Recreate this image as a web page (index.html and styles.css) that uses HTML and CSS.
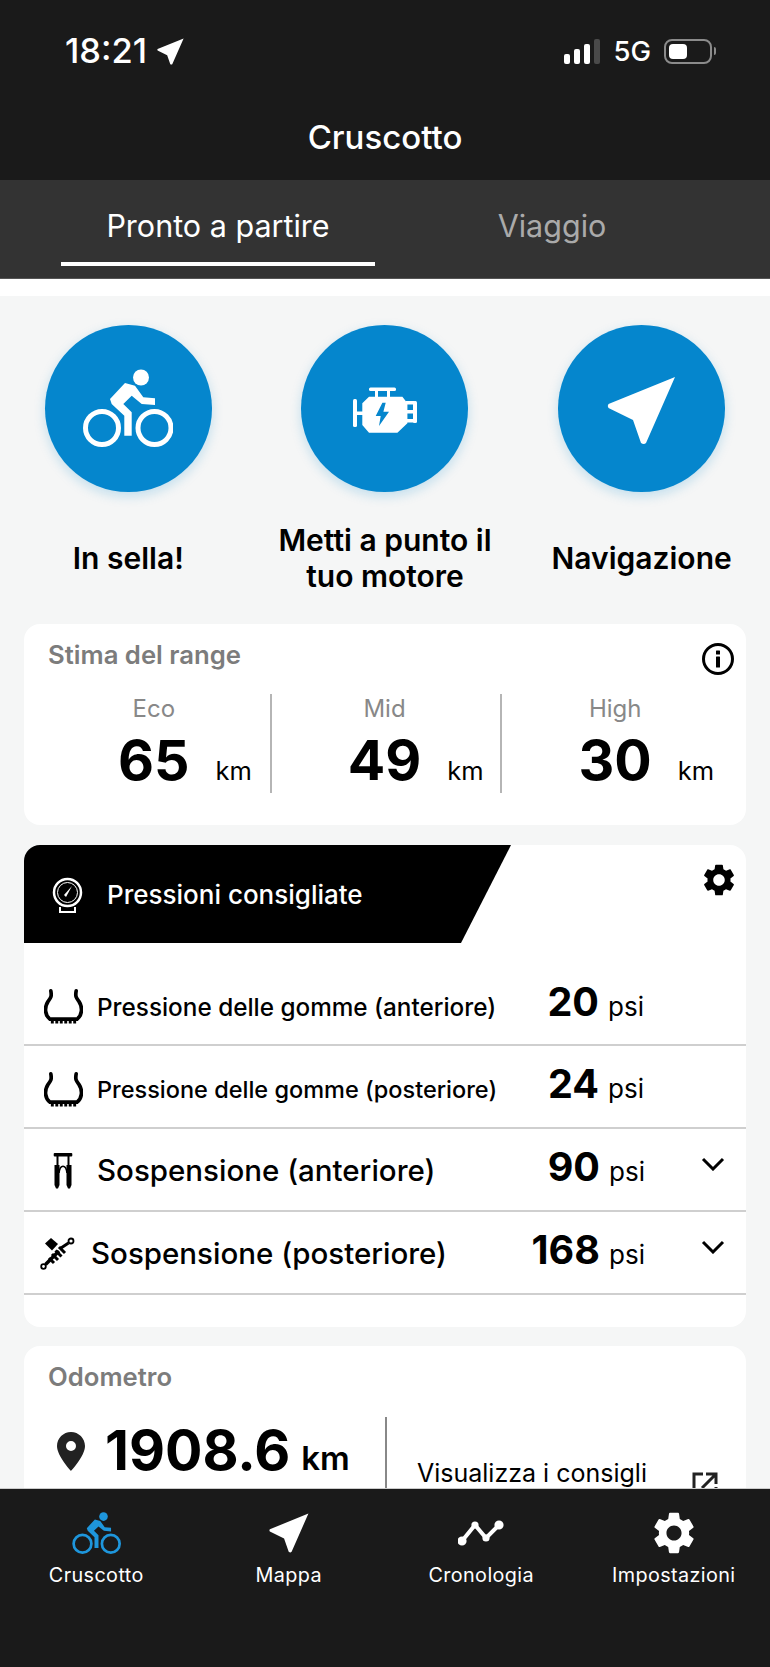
FILE: index.html
```html
<!doctype html>
<html lang="it">
<head>
    <meta charset="UTF-8">
    <meta name="viewport" content="width=device-width, initial-scale=1.0">
    <title>Cruscotto</title>
    <link rel="stylesheet" href="styles.css">
</head>
<body>
<div class="app">
    <!-- barra superiore -->
    <header class="top">
        <div class="status">
            <div class="status-left">
                <span class="time">18:21</span>
                <svg class="loc" viewBox="0 0 69 69"><path d="M68 1L1.5 28Q0 30 1.5 32L26 44L34 67Q37 69 39 67Z"/></svg>
            </div>
            <div class="status-right">
                <div class="signal"><i class="s1"></i><i class="s2"></i><i class="s3"></i><i class="s4"></i></div>
                <span class="net">5G</span>
                <div class="battery"><div class="battery-fill"></div></div>
                <div class="battery-nub"></div>
            </div>
        </div>
        <h1 class="title">Cruscotto</h1>
    </header>
    <nav class="tabs">
        <div class="tab current">Pronto a partire</div>
        <div class="tab">Viaggio</div>
    </nav>

    <main class="content">
        <div class="strip"></div>

        <section class="actions">
            <div class="action">
                <div class="circle">
                    <svg class="ic-bike" viewBox="0 0 90 78">
                        <circle class="wheel" cx="19" cy="59" r="16.5"/>
                        <circle class="wheel" cx="71.5" cy="59" r="16.5"/>
                        <circle cx="58" cy="8.5" r="8"/>
                        <path d="M27 30L42 14L52 16.7L60.3 28.3L72 29.3V36L58.7 35L48.7 26.7L40.3 35L48.7 43.3V66.7H41.3V46.7L28.7 35Z"/>
                    </svg>
                </div>
                <div class="action-label">In sella!</div>
            </div>
            <div class="action">
                <div class="circle">
                    <svg class="ic-engine" viewBox="0 0 64 46">
                        <rect x="16" y="0.5" width="27" height="3.5" rx="1.5"/>
                        <rect x="22" y="3" width="3" height="8"/>
                        <rect x="34" y="3" width="3" height="8"/>
                        <rect x="0" y="12" width="4" height="28" rx="1.5"/>
                        <rect x="3" y="24.5" width="8" height="3.5"/>
                        <rect x="60" y="14" width="4" height="22" rx="1.5"/>
                        <rect x="53" y="14" width="8" height="3.5"/>
                        <rect x="53" y="23" width="8" height="3.5"/>
                        <rect x="53" y="32" width="8" height="3.5"/>
                        <path fill-rule="evenodd" d="M9.3 16.3L16 9.7H49.4L54.4 16.3V36.3L44.4 45.7H16L9.3 38ZM29.4 15.7L22.7 29H27.7L26 39L36 24.7H30.4L32.7 15.7Z"/>
                    </svg>
                </div>
                <div class="action-label">Metti a punto il<br>tuo motore</div>
            </div>
            <div class="action">
                <div class="circle">
                    <svg class="ic-nav" viewBox="0 0 69 69"><path d="M68 1L1.5 28Q0 30 1.5 32L26 44L34 67Q37 69 39 67Z"/></svg>
                </div>
                <div class="action-label">Navigazione</div>
            </div>
        </section>

        <section class="card range">
            <div class="card-head">
                <h2 class="card-title">Stima del range</h2>
                <svg class="ic-info" viewBox="0 0 34 34">
                    <circle cx="17" cy="17" r="14.5"/>
                    <rect x="15" y="14.5" width="4" height="11" rx="0.5"/>
                    <rect x="15" y="8.5" width="4" height="4" rx="0.5"/>
                </svg>
            </div>
            <div class="range-row">
                <div class="range-col">
                    <div class="range-name">Eco</div>
                    <div class="range-value"><b>65</b><span>km</span></div>
                </div>
                <div class="range-col">
                    <div class="range-name">Mid</div>
                    <div class="range-value"><b>49</b><span>km</span></div>
                </div>
                <div class="range-col">
                    <div class="range-name">High</div>
                    <div class="range-value"><b>30</b><span>km</span></div>
                </div>
            </div>
        </section>

        <section class="card pressure">
            <div class="pressure-head">
                <div class="banner">
                    <svg class="ic-gauge" viewBox="0 0 31 37">
                        <circle class="g-ring" cx="15.5" cy="15.5" r="13.5"/>
                        <circle class="g-inner" cx="15.5" cy="15.5" r="10"/>
                        <path class="g-needle" d="M20 9L12 18L14 20Z"/>
                        <path class="g-base" d="M8 30V35H23V30"/>
                    </svg>
                    <span class="banner-text">Pressioni consigliate</span>
                </div>
                <svg class="ic-gear" viewBox="2.5 2 19 20"><path d="M19.14 12.94c.04-.3.06-.61.06-.94 0-.32-.02-.64-.07-.94l2.03-1.58c.18-.14.23-.41.12-.61l-1.92-3.32c-.12-.22-.37-.29-.59-.22l-2.39.96c-.5-.38-1.03-.7-1.62-.94l-.36-2.54c-.04-.24-.24-.41-.48-.41h-3.84c-.24 0-.43.17-.47.41l-.36 2.54c-.59.24-1.13.57-1.62.94l-2.39-.96c-.22-.08-.47 0-.59.22L2.74 8.87c-.12.21-.08.47.12.61l2.03 1.58c-.05.3-.09.63-.09.94s.02.64.07.94l-2.03 1.58c-.18.14-.23.41-.12.61l1.92 3.32c.12.22.37.29.59.22l2.39-.96c.5.38 1.03.7 1.62.94l.36 2.54c.05.24.24.41.48.41h3.84c.24 0 .44-.17.47-.41l.36-2.54c.59-.24 1.13-.56 1.62-.94l2.39.96c.22.08.47 0 .59-.22l1.92-3.32c.12-.22.07-.47-.12-.61l-2.01-1.58zM12 15.6c-1.98 0-3.6-1.62-3.6-3.6s1.62-3.6 3.6-3.6 3.6 1.62 3.6 3.6-1.62 3.6-3.6 3.6z"/></svg>
            </div>
            <div class="rows">
                <div class="row">
                    <svg class="ic-tyre" viewBox="0 0 40 36"><path class="t-line" d="M7 2C8 8 7 9 4 13C0 19 1 27 6 31H34C39 27 40 19 36 13C33 9 32 8 33 2"/><path class="t-tread" d="M7 33.5H33"/></svg>
                    <span class="row-label small">Pressione delle gomme (anteriore)</span>
                    <b class="row-num">20</b><span class="row-unit">psi</span>
                </div>
                <div class="row">
                    <svg class="ic-tyre" viewBox="0 0 40 36"><path class="t-line" d="M7 2C8 8 7 9 4 13C0 19 1 27 6 31H34C39 27 40 19 36 13C33 9 32 8 33 2"/><path class="t-tread" d="M7 33.5H33"/></svg>
                    <span class="row-label small smaller">Pressione delle gomme (posteriore)</span>
                    <b class="row-num">24</b><span class="row-unit">psi</span>
                </div>
                <div class="row row-more">
                    <svg class="ic-fork" viewBox="0 0 20 37">
                        <rect x="0.7" y="1" width="18.6" height="3.5" rx="1"/>
                        <rect x="3.5" y="4" width="2" height="9"/>
                        <rect x="14.5" y="4" width="2" height="9"/>
                        <path d="M1.5 13H6.5V33L5 36.5H3L1.5 33Z"/>
                        <path d="M13.5 13H18.5V33L17 36.5H15L13.5 33Z"/>
                        <path class="f-arch" d="M6 21C7 12 13 12 14 21"/>
                    </svg>
                    <span class="row-label">Sospensione (anteriore)</span>
                    <b class="row-num">90</b><span class="row-unit">psi</span>
                    <svg class="ic-chev" viewBox="0 0 24 14"><path d="M2 2L12 12L22 2"/></svg>
                </div>
                <div class="row row-more">
                    <svg class="ic-shock" viewBox="0 0 35 33">
                        <circle class="s-eye" cx="31" cy="4" r="2.5"/>
                        <circle class="s-eye" cx="3.5" cy="29.5" r="2.3"/>
                        <path class="s-rod" d="M5.5 27.5L19 14"/>
                        <path class="s-link" d="M28.5 6L21 11"/>
                        <path d="M5 6.5L11 1L18 7L12 13.5Z"/>
                        <path class="s-spring" d="M12 17L18 23M15.5 13.5L21.5 19.5M19 10L25 16M9 21L14 26"/>
                    </svg>
                    <span class="row-label">Sospensione (posteriore)</span>
                    <b class="row-num">168</b><span class="row-unit">psi</span>
                    <svg class="ic-chev" viewBox="0 0 24 14"><path d="M2 2L12 12L22 2"/></svg>
                </div>
            </div>
        </section>

        <section class="card odo">
            <h2 class="card-title">Odometro</h2>
            <div class="odo-row">
                <div class="odo-left">
                    <svg class="ic-pin" viewBox="0 0 28 39"><path fill-rule="evenodd" d="M14 0C6.3 0 0 6.3 0 14C0 24 14 39 14 39S28 24 28 14C28 6.3 21.7 0 14 0ZM14 9A5 5 0 1 1 14 19A5 5 0 1 1 14 9Z"/></svg>
                    <b class="odo-num">1908.6</b><span class="odo-unit">km</span>
                </div>
                <div class="odo-right">
                    <span class="odo-link">Visualizza i consigli</span>
                    <svg class="ic-ext" viewBox="0 0 26 26"><path d="M11 2H2V24H24V15M14 2H24V12M24 2L10 16"/></svg>
                </div>
            </div>
        </section>
    </main>

    <!-- menu in basso -->
    <footer class="bottom">
        <div class="bottom-item">
            <svg class="ic-bike blue" viewBox="0 0 90 78">
                <circle class="wheel" cx="19" cy="59" r="16.5"/>
                <circle class="wheel" cx="71.5" cy="59" r="16.5"/>
                <circle cx="58" cy="8.5" r="8"/>
                <path d="M27 30L42 14L52 16.7L60.3 28.3L72 29.3V36L58.7 35L48.7 26.7L40.3 35L48.7 43.3V66.7H41.3V46.7L28.7 35Z"/>
            </svg>
            <span>Cruscotto</span>
        </div>
        <div class="bottom-item">
            <svg class="ic-bottom" viewBox="0 0 69 69"><path d="M68 1L1.5 28Q0 30 1.5 32L26 44L34 67Q37 69 39 67Z"/></svg>
            <span>Mappa</span>
        </div>
        <div class="bottom-item">
            <svg class="ic-graph" viewBox="0 0 46 42">
                <path d="M4 29L17 13L28 26L41 13"/>
                <circle cx="4" cy="29" r="2.6"/><circle cx="17" cy="13" r="1.6"/><circle cx="28" cy="26" r="1.6"/><circle cx="41" cy="13" r="2.6"/>
            </svg>
            <span>Cronologia</span>
        </div>
        <div class="bottom-item">
            <svg class="ic-bottom" viewBox="2.5 2 19 20"><path d="M19.14 12.94c.04-.3.06-.61.06-.94 0-.32-.02-.64-.07-.94l2.03-1.58c.18-.14.23-.41.12-.61l-1.92-3.32c-.12-.22-.37-.29-.59-.22l-2.39.96c-.5-.38-1.03-.7-1.62-.94l-.36-2.54c-.04-.24-.24-.41-.48-.41h-3.84c-.24 0-.43.17-.47.41l-.36 2.54c-.59.24-1.13.57-1.62.94l-2.39-.96c-.22-.08-.47 0-.59.22L2.74 8.87c-.12.21-.08.47.12.61l2.03 1.58c-.05.3-.09.63-.09.94s.02.64.07.94l-2.03 1.58c-.18.14-.23.41-.12.61l1.92 3.32c.12.22.37.29.59.22l2.39-.96c.5.38 1.03.7 1.62.94l.36 2.54c.05.24.24.41.48.41h3.84c.24 0 .44-.17.47-.41l.36-2.54c.59-.24 1.13-.56 1.62-.94l2.39.96c.22.08.47 0 .59-.22l1.92-3.32c.12-.22.07-.47-.12-.61l-2.01-1.58zM12 15.6c-1.98 0-3.6-1.62-3.6-3.6s1.62-3.6 3.6-3.6 3.6 1.62 3.6 3.6-1.62 3.6-3.6 3.6z"/></svg>
            <span>Impostazioni</span>
        </div>
    </footer>
</div>
</body>
</html>
```

FILE: styles.css
```css
*{
    padding: 0;
    margin: 0;
    box-sizing: border-box;
}
body{
    font-family: Inter, "Liberation Sans", sans-serif;
    background: #f5f6f6;
    color: #000;
}
svg{
    display: block;
    flex: none;
}
.app{
    display: flex;
    flex-direction: column;
    height: 100vh;
    overflow: hidden;
}

/* barra superiore */
.top{
    height: 180px;
    background: #1a1a1a;
    color: #fff;
}
.status{
    display: flex;
    justify-content: space-between;
    align-items: center;
    height: 64px;
    padding: 38px 54px 0 65px;
}
.status-left{
    display: flex;
    align-items: center;
    gap: 10px;
}
.time{
    font-size: 34.5px;
    font-weight: 500;
    line-height: 28px;
}
.loc{
    width: 27px;
    height: 27px;
    fill: #fff;
}
.status-right{
    display: flex;
    align-items: center;
}
.signal{
    display: flex;
    align-items: flex-end;
    gap: 3.5px;
    height: 25px;
}
.signal i{
    display: block;
    width: 6.5px;
    border-radius: 2px;
    background: #fff;
}
.signal .s1{ height: 10px; }
.signal .s2{ height: 15px; }
.signal .s3{ height: 20px; }
.signal .s4{ height: 25px; background: #4a4a4a; }
.net{
    margin-left: 13px;
    font-size: 27.5px;
    font-weight: 500;
    line-height: 28px;
}
.battery{
    margin-left: 13px;
    width: 48px;
    height: 25px;
    padding: 3px;
    border: 2px solid #8b8b8b;
    border-radius: 8px;
}
.battery-fill{
    width: 18px;
    height: 15px;
    border-radius: 4px;
    background: #fff;
}
.battery-nub{
    margin-left: 2px;
    width: 2px;
    height: 8px;
    border-radius: 0 2px 2px 0;
    background: #8b8b8b;
}
.title{
    margin-top: 55px;
    text-align: center;
    font-size: 33px;
    font-weight: 500;
    line-height: 36px;
}
.tabs{
    display: flex;
    gap: 20px;
    height: 99px;
    padding: 0 61px 12px;
    background: #333;
    border-bottom: 1px solid #555;
}
.tab{
    flex: 1;
    padding-top: 28px;
    text-align: center;
    font-size: 30.5px;
    line-height: 36px;
    color: #aaa;
}
.tab.current{
    color: #fff;
    border-bottom: 4px solid #fff;
}

/* contenuto */
.content{
    flex: 1;
    overflow: hidden;
}
.strip{
    height: 17px;
    background: #fff;
}
.actions{
    display: grid;
    grid-template-columns: repeat(3, 1fr);
    padding-top: 29px;
}
.action{
    display: flex;
    flex-direction: column;
    align-items: center;
}
.circle{
    display: flex;
    align-items: center;
    justify-content: center;
    width: 167px;
    height: 167px;
    border-radius: 50%;
    background: #0586cd;
    box-shadow: 0 4px 12px rgba(7, 135, 207, 0.22);
    fill: #fff;
}
.ic-bike{
    width: 90px;
    height: 78px;
    margin-bottom: 2px;
    fill: #fff;
}
.wheel{
    fill: none;
    stroke: #fff;
    stroke-width: 5;
}
.ic-engine{
    width: 64px;
    height: 46px;
    margin-top: 2px;
}
.ic-nav{
    width: 69px;
    height: 69px;
    margin-top: 4px;
}
.action-label{
    display: flex;
    align-items: center;
    height: 72px;
    margin-top: 30px;
    text-align: center;
    font-size: 30px;
    font-weight: 600;
    line-height: 36px;
}
.card{
    margin: 0 24px;
    background: #fff;
    border-radius: 16px;
}
.range{
    height: 201px;
    margin-top: 30px;
    padding-top: 13px;
}
.card-head{
    display: flex;
    justify-content: space-between;
    padding: 0 11px 0 24px;
}
.card-title{
    font-size: 25.7px;
    font-weight: 600;
    line-height: 36px;
    color: #7c7c7c;
}
.ic-info{
    width: 34px;
    height: 34px;
    margin-top: 5px;
    fill: #000;
}
.ic-info circle{
    fill: none;
    stroke: #000;
    stroke-width: 3;
}
.range-row{
    display: grid;
    grid-template-columns: repeat(3, 1fr);
    margin: 18px 13px 0 17px;
}
.range-col{
    height: 99px;
    padding-right: 3px;
    border-right: 2px solid #b5b5b5;
}
.range-col:last-child{
    padding-right: 5px;
    border-right: 0;
}
.range-name{
    margin-bottom: 6px;
    text-align: center;
    font-size: 24px;
    line-height: 30px;
    color: #888;
}
.range-value{
    display: grid;
    grid-template-columns: 1fr auto 1fr;
    align-items: baseline;
    line-height: 60px;
}
.range-value b{
    grid-column: 2;
    font-size: 55.5px;
    font-weight: 700;
}
.range-value span{
    padding-left: 26px;
    font-size: 25.5px;
}
.pressure{
    height: 482px;
    margin-top: 20px;
    overflow: hidden;
}
.pressure-head{
    display: flex;
    justify-content: space-between;
    height: 98px;
}
.banner{
    display: flex;
    align-items: center;
    width: 487px;
    padding-left: 28px;
    background: #000;
    color: #fff;
    clip-path: polygon(0 0, 100% 0, 437px 100%, 0 100%);
}
.ic-gauge{
    width: 31px;
    height: 37px;
    margin-top: 2px;
}
.g-ring, .g-inner, .g-base{
    fill: none;
    stroke: #fff;
}
.g-ring{ stroke-width: 2.5; }
.g-inner{ stroke-width: 1; }
.g-base{ stroke-width: 2; }
.g-needle{ fill: #fff; }
.banner-text{
    margin-left: 24px;
    font-size: 26px;
    font-weight: 500;
}
.ic-gear{
    width: 32px;
    height: 32px;
    margin: 19px 11px 0 0;
    fill: #000;
}
.rows{
    padding-top: 20px;
}
.row{
    display: flex;
    align-items: baseline;
    height: 83px;
    padding-right: 102px;
    border-bottom: 2px solid #cfcfcf;
}
.row-more{
    padding-right: 21px;
}
.row svg{
    align-self: flex-start;
}
.ic-tyre{
    width: 39px;
    height: 35px;
    margin: 26px 14px 0 20px;
}
.t-line{
    fill: none;
    stroke: #000;
    stroke-width: 3.8;
    stroke-linecap: round;
}
.t-tread{
    fill: none;
    stroke: #000;
    stroke-width: 4;
    stroke-dasharray: 3 1.6;
}
.ic-fork{
    width: 20px;
    height: 37px;
    margin: 23px 24px 0 29px;
}
.f-arch{
    fill: none;
    stroke: #000;
    stroke-width: 1.6;
}
.ic-shock{
    width: 35px;
    height: 33px;
    margin: 25px 16px 0 16px;
}
.s-eye, .s-rod, .s-link, .s-spring{
    fill: none;
    stroke: #000;
}
.s-eye{ stroke-width: 1.8; }
.s-rod{ stroke-width: 3.5; }
.s-link{ stroke-width: 3; }
.s-spring{ stroke-width: 3; }
.row-label{
    flex: 1;
    font-size: 29.5px;
    font-weight: 500;
    line-height: 83px;
}
.row-label.small{ font-size: 24.3px; line-height: 88px; }
.row-label.smaller{ font-size: 23.5px; }
.row-num{
    font-size: 39.5px;
    font-weight: 700;
}
.row-unit{
    margin-left: 9px;
    width: 36px;
    font-size: 26px;
}
.ic-chev{
    width: 24px;
    height: 14px;
    margin: 28px 0 0 56px;
    fill: none;
    stroke: #000;
    stroke-width: 3;
}
.odo{
    height: 260px;
    margin-top: 19px;
    padding: 13px 0 0 24px;
}
.odo-row{
    display: flex;
    margin-top: 22px;
}
.odo-left{
    display: flex;
    align-items: baseline;
    width: 339px;
    height: 140px;
    border-right: 2px solid #888;
    line-height: 66px;
}
.ic-pin{
    align-self: flex-start;
    width: 28px;
    height: 39px;
    margin: 15px 0 0 9px;
    fill: #222;
}
.odo-num{
    margin-left: 20px;
    font-size: 55.5px;
    font-weight: 700;
}
.odo-unit{
    margin-left: 11px;
    font-size: 33px;
    font-weight: 600;
}
.odo-right{
    display: flex;
    align-items: flex-start;
    padding: 40px 0 0 30px;
}
.odo-link{
    font-size: 25px;
    line-height: 32px;
}
.ic-ext{
    width: 26px;
    height: 26px;
    margin: 15px 0 0 45px;
    fill: none;
    stroke: #222;
    stroke-width: 3;
}

/* menu in basso */
.bottom{
    display: grid;
    grid-template-columns: repeat(4, 1fr);
    height: 179px;
    padding-top: 23px;
    background: #1a1a1a;
    border-top: 1px solid #ccc;
}
.bottom-item{
    display: flex;
    flex-direction: column;
    align-items: center;
    color: #fff;
    font-size: 19.8px;
    letter-spacing: 0.4px;
}
.bottom-item svg{
    height: 42px;
    margin-bottom: 9px;
}
.bottom-item span{
    line-height: 24px;
}
.ic-bike.blue{
    width: 49px;
    fill: #1e96dc;
}
.ic-bike.blue .wheel{
    stroke: #1e96dc;
}
.ic-bottom{
    width: 40px;
    fill: #fff;
}
.ic-graph{
    width: 46px;
    fill: #fff;
    stroke: #fff;
    stroke-width: 4;
}
.ic-graph path{
    fill: none;
}
```
